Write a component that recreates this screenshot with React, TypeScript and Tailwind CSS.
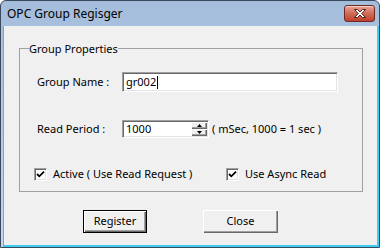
import React from 'react'

function CloseX() {
  return (
    <div className="w-[31px] h-[17px] rounded-[3px] border border-[#6e2a22] bg-gradient-to-b from-[#e9a597] via-[#d06a58] to-[#c0402c] flex items-center justify-center shadow-[inset_0_1px_0_rgba(255,255,255,0.5)]">
      <svg width="14" height="11" viewBox="0 0 14 11">
        <path
          d="M1.5 1.5 H4.5 L7 4 L9.5 1.5 H12.5 L8.7 5.5 L12.5 9.5 H9.5 L7 7 L4.5 9.5 H1.5 L5.3 5.5 Z"
          fill="#ffffff"
          stroke="#4a2620"
          strokeWidth="1"
          strokeLinejoin="round"
        />
      </svg>
    </div>
  )
}

function CheckBox({ label }: { label: string }) {
  return (
    <label className="flex items-center gap-[6px]">
      <span className="w-[13px] h-[13px] bg-white border border-t-[#a0a0a0] border-l-[#a0a0a0] border-b-white border-r-white shadow-[inset_1px_1px_0_#696969,inset_-1px_-1px_0_#e3e3e3] flex items-center justify-center">
        <svg width="9" height="9" viewBox="0 0 9 9">
          <path d="M1 4 L3.3 6.3 L8 1.6" fill="none" stroke="#000" strokeWidth="1.8" />
        </svg>
      </span>
      <span>{label}</span>
    </label>
  )
}

export default function App() {
  const sunken =
    'bg-white border border-t-[#a0a0a0] border-l-[#a0a0a0] border-b-white border-r-white shadow-[inset_1px_1px_0_#696969,inset_-1px_-1px_0_#e3e3e3]'
  const raised =
    'bg-[#f0f0f0] shadow-[inset_1px_1px_0_#ffffff,inset_-1px_-1px_0_#696969,inset_-2px_-2px_0_#a0a0a0]'

  return (
    <div className="w-[380px] h-[248px] flex flex-col border border-[#3a4a5e] rounded-t-[6px] bg-gradient-to-b from-[#a4bddb] to-[#c4d7ed] overflow-hidden">
      <div className="h-[25px] flex items-center justify-between pl-[6px] pr-[4px]">
        <span className="text-[12px] text-black font-['Noto_Sans',sans-serif]">OPC Group Regisger</span>
        <CloseX />
      </div>

      <div className="flex-1 ml-[2px] bg-[#f0f0f0] border-l border-[#7fa3c9] border-r-2 border-r-[#3ccdf0] border-b-2 border-b-[#3ccdf0] font-['Noto_Sans',sans-serif] text-[11px] text-black">
        <fieldset className="ml-[15px] mt-[16px] w-[344px] h-[150px] border border-[#a0a0a0] px-[9px]">
          <legend className="px-0 leading-[13px]">Group Properties</legend>

          <div className="flex items-center mt-[17px] pl-[8px]">
            <span className="w-[85px]">Group Name :</span>
            <div className={`${sunken} w-[216px] h-[20px] flex items-center pl-[3px]`}>
              gr002<span className="w-px h-[13px] bg-black ml-px" />
            </div>
          </div>

          <div className="flex items-center mt-[28px] pl-[8px]">
            <span className="w-[85px]">Read Period :</span>
            <div className={`${sunken} w-[87px] h-[18px] flex items-center pl-[3px] pr-px`}>
              <span className="flex-1">1000</span>
              <div className="flex flex-col w-[16px] h-[14px]">
                <div className={`${raised} flex-1 flex items-center justify-center`}>
                  <svg width="5" height="3" viewBox="0 0 5 3"><path d="M2.5 0 L5 3 H0 Z" fill="#000" /></svg>
                </div>
                <div className={`${raised} flex-1 flex items-center justify-center`}>
                  <svg width="5" height="3" viewBox="0 0 5 3"><path d="M0 0 H5 L2.5 3 Z" fill="#000" /></svg>
                </div>
              </div>
            </div>
            <span className="ml-[3px]">( mSec, 1000 = 1 sec )</span>
          </div>

          <div className="flex items-center mt-[28px] pl-[5px]">
            <div className="w-[192px]">
              <CheckBox label="Active ( Use Read Request )" />
            </div>
            <CheckBox label="Use Async Read" />
          </div>
        </fieldset>

        <div className="flex mt-[18px]">
          <button className="ml-[79px] w-[64px] h-[23px] border border-black bg-[#f0f0f0] shadow-[inset_1px_1px_0_#ffffff,inset_-1px_-1px_0_#696969,inset_-2px_-2px_0_#a0a0a0]">
            Register
          </button>
          <button className={`${raised} ml-[56px] w-[75px] h-[23px] shadow-[inset_1px_1px_0_#e3e3e3,inset_2px_2px_0_#ffffff,inset_-1px_-1px_0_#696969,inset_-2px_-2px_0_#a0a0a0]`}>
            Close
          </button>
        </div>
      </div>
    </div>
  )
}
